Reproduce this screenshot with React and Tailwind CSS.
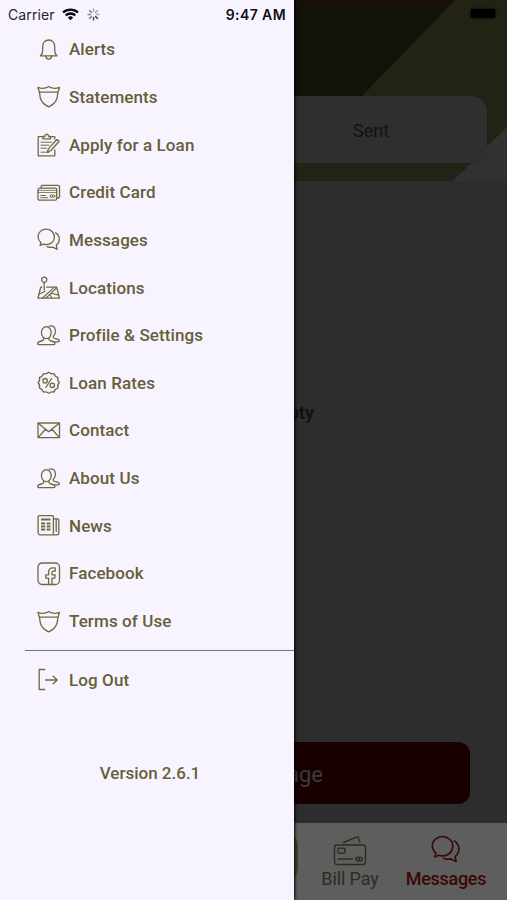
import React from "react";

function Icon({ size = 24, className = "", children }) {
  return (
    <svg width={size} height={size} viewBox="0 0 24 24" fill="none" stroke="currentColor" strokeWidth="1.3" strokeLinecap="round" strokeLinejoin="round" className={`shrink-0 ${className}`}>
      {children}
    </svg>
  );
}

const BellIcon = () => (
  <Icon>
    <path d="M3.500 17.800c1.800-1.400 2.200-2.700 2.200-5.200V8.800C5.700 4.800 8 2 11.700 2s6 2.800 6 6.800v3.800c0 2.500.4 3.800 2.200 5.200z" />
    <path d="M8.800 18c0 2 1.200 3.100 2.900 3.100s2.900-1.100 2.900-3.100" />
  </Icon>
);

const ShieldIcon = () => (
  <Icon>
    <path d="M1 2.400c2.600 1.100 6 1.300 8.200.3.900-.4 1.600-.7 2.500-1.200.9.500 1.600.8 2.500 1.200 2.200 1 5.600.8 8.200-.3-.2 1.900-.8 2.700-1.300 4.100-.6 1.900-.3 4.200-1.200 7-1.200 3.900-4.300 6.500-8.200 8.400-3.900-1.900-7-4.500-8.200-8.400-.9-2.800-.6-5.100-1.200-7C1.800 5.100 1.200 4.300 1 2.400z" />
    <path d="M2.300 7.200h18.800" />
  </Icon>
);

const LoanIcon = () => (
  <Icon>
    <path d="M6 3.700H1.200v19.100h16.600v-6M17.800 6.200V3.700H13" />
    <path d="M5.800 5.800V3.500h2.100c.1-1.500.7-2.300 1.800-2.300s1.700.8 1.800 2.300h2.100v2.300z" />
    <path d="M4 9.200h10.500M4 12.200h8M4 15.200h5.500M4 19.200h8" strokeWidth="1" />
    <path d="M20 6.500l2.200 1.800-8.300 9.200-3.600 1.600 1.200-3.500z" />
  </Icon>
);

const CardsIcon = () => (
  <Icon>
    <path d="M4.200 7V5.600c0-.8.500-1.300 1.300-1.300h15.700c.8 0 1.300.5 1.300 1.300v10.100c0 .8-.5 1.300-1.300 1.300H20" />
    <rect x="1" y="7.200" width="18.700" height="12" rx="1.500" />
    <path d="M1 9.400h18.700M1 11.500h18.700" strokeWidth=".8" />
    <path d="M3.700 14.500h5M3.700 16.700h7" strokeWidth="1" />
    <circle cx="14.300" cy="15.200" r="1.300" strokeWidth="1" />
    <circle cx="16.600" cy="15.200" r="1.300" strokeWidth="1" />
  </Icon>
);

const ChatPaths = () => (
  <>
    <path d="M3.100 17.500l.8-3A8.500 8.500 0 0 1 1 8.800C1 4.500 4.600 1.200 9.200 1.200s8.200 3.300 8.200 7.700-3.600 7.800-8.200 7.800c-1.100 0-2-.2-2.900-.5z" />
    <path d="M18.600 4.700a7.700 7.700 0 0 1 3.700 6.500c0 2.600-1.200 4.500-3 6l.8 4.100-4.200-2.200c-2.100.5-4 .3-5.700-.5" />
  </>
);

const ChatIcon = () => (
  <Icon>
    <ChatPaths />
  </Icon>
);

const MapIcon = () => (
  <Icon>
    <circle cx="7.200" cy="3.800" r="2.600" />
    <path d="M7.200 6.400v7.500" />
    <path d="M4.800 11.200H3.700L1 22.200h21.400l-2.700-11H9.500" />
    <path d="M1.900 18.200l6.300-3M5.500 22l11.700-10.600M9 22l10.500-10M14.200 17.300l7.500 1.800M13 18.500l1.600 3.500" strokeWidth="1.100" />
  </Icon>
);

const PeopleIcon = () => (
  <Icon>
    <path d="M12.400 2.200c3.400-1.300 6.100 1.200 6.100 5 0 2.200-.8 4-2.200 5.100v.9c0 .8.800 1.200 2.300 1.500 2.400.5 3.700 1 3.700 2.100 0 .8-.4 1-1.300 1h-3.300" />
    <path d="M6.700 13.800v1.500c0 1-.8 1.400-2.300 1.700-2.400.5-3.700 1.100-3.700 2.500 0 .9.500 1.200 1.400 1.200h14.400c.9 0 1.400-.3 1.400-1.200 0-1.400-1.300-2-3.700-2.500-1.500-.3-2.300-.7-2.300-1.700v-1.500" />
    <ellipse cx="9.300" cy="8.600" rx="4.900" ry="6" fill="#f8f4ff" />
  </Icon>
);

const PercentIcon = () => (
  <Icon>
    <path d="M11.700 1.200Q13.600 3.400 17 2.600Q17.600 5.700 20.900 6.500Q20.100 9.600 22.300 11.800Q20.100 14 20.900 17.100Q17.600 18 17 21Q13.800 20.200 11.700 22.400Q9.600 20.200 6.400 21Q5.600 18 2.500 17.100Q3.300 14 1.100 11.800Q3.300 9.600 2.500 6.500Q5.600 5.700 6.400 2.600Q9.600 3.400 11.700 1.200z" />
    <circle cx="8.100" cy="9.700" r="2.200" />
    <circle cx="15.300" cy="14.300" r="2.200" />
    <path d="M14.600 7.500l-5.800 9" />
  </Icon>
);

const MailIcon = () => (
  <Icon>
    <rect x="1" y="4" width="21.500" height="14.700" rx=".5" />
    <path d="M1.300 4.300l10.400 8.400 10.500-8.400M1.300 18.400l7.200-8.200M22.200 18.400L15 10.200" />
  </Icon>
);

const NewsIcon = () => (
  <Icon>
    <path d="M16.400 20.800V2.900c0-.9-.4-1.300-1.300-1.300H2.400c-.9 0-1.300.4-1.300 1.300v16.200c0 1.200.6 1.700 1.700 1.700h17c1.400 0 2-.7 2-2V6.300c0-1-.4-1.500-1.300-1.500h-4.100" />
    <path d="M19.200 5v12.500" />
    <path d="M4 5.500h9.500M4 9.500h4.200M4 12.500h4.200M4 15.500h4.200M9.700 9.500h3.800M9.700 12.500h3.800M9.700 15.500h3.800" strokeWidth="1.800" strokeLinecap="butt" />
  </Icon>
);

const FacebookIcon = () => (
  <Icon>
    <rect x="1" y="1" width="21.500" height="21.500" rx="4" />
    <path d="M11.600 22.300v-6.100H8.800v-3.400h2.800v-2.600c0-3 1.700-4.400 4.300-4.400h2.300v3.300h-1.700c-1.100 0-1.500.5-1.500 1.500v2.200h3.200l-.5 3.400H15v6.100" />
  </Icon>
);

const LogOutIcon = () => (
  <Icon>
    <path d="M8.200 1.500H2.200v20h6M8 12h12.200M15.700 7.700L20.200 12l-4.500 4.300" strokeLinecap="butt" />
  </Icon>
);

const menuItems = [
  { label: "Alerts", icon: BellIcon },
  { label: "Statements", icon: ShieldIcon },
  { label: "Apply for a Loan", icon: LoanIcon },
  { label: "Credit Card", icon: CardsIcon },
  { label: "Messages", icon: ChatIcon },
  { label: "Locations", icon: MapIcon },
  { label: "Profile & Settings", icon: PeopleIcon },
  { label: "Loan Rates", icon: PercentIcon },
  { label: "Contact", icon: MailIcon },
  { label: "About Us", icon: PeopleIcon },
  { label: "News", icon: NewsIcon },
  { label: "Facebook", icon: FacebookIcon },
  { label: "Terms of Use", icon: ShieldIcon },
];

function MenuItem({ label, icon: ItemIcon }) {
  return (
    <button className="flex h-[47.65px] w-full items-center gap-2 pl-[37px] text-left text-[#71683f]">
      <ItemIcon />
      <span className="whitespace-nowrap pt-[0.5px] tracking-[0.1px] text-[#675e3a]">{label}</span>
    </button>
  );
}

function StatusBar() {
  return (
    <div className="flex h-[26px] items-center pt-0.5 pl-2 pr-2 font-['Inter',sans-serif] text-[14px] font-normal text-[#25222b]">
      <span className="w-[48px] tracking-[0.1px]">Carrier</span>
      <svg width="17" height="13" viewBox="0 0 17 13" fill="none" stroke="#08070a" strokeWidth="2.300" className="ml-1.5">
        <path d="M1 4.500a11 11 0 0 1 15 0M3.700 7.400a7 7 0 0 1 9.600 0" />
        <path d="M8.500 12.300L5.800 9.600a4 4 0 0 1 5.400 0z" fill="#08070a" stroke="none" />
      </svg>
      <svg width="13" height="13" viewBox="0 0 13 13" strokeWidth="1.500" strokeLinecap="round" className="ml-2">
        <path d="M6.500 1v2.500M10.400 2.600L8.600 4.400M12 6.500H9.500" stroke="#aaa6b0" />
        <path d="M10.400 10.400L8.600 8.600M6.500 12V9.500" stroke="#4b4850" />
        <path d="M2.600 10.400l1.800-1.800M1 6.500h2.500M2.600 2.600l1.800 1.800" stroke="#89858f" />
      </svg>
      <span className="ml-auto font-semibold tracking-[0.4px] text-[#100e14]">9:47 AM</span>
    </div>
  );
}

function Drawer() {
  return (
    <aside className="absolute inset-y-0 left-0 flex w-[294px] flex-col bg-[#f8f4ff] text-[17px] font-medium text-[#675e3a] shadow-[1px_0_3px_#000]">
      <StatusBar />
      <nav>
        {menuItems.map((item) => (
          <MenuItem key={item.label} {...item} />
        ))}
        <div className="mt-[4.5px] ml-[25px] h-px bg-[#77748a]" />
        <div className="pt-[5.500px]">
          <MenuItem label="Log Out" icon={LogOutIcon} />
        </div>
      </nav>
      <p className="mt-[57.500px] pl-1.5 text-center">Version 2.6.1</p>
    </aside>
  );
}

function MessagesPage() {
  return (
    <main className="flex h-full flex-col bg-[#2d2d2d]">
      <header className="relative h-[181px] bg-[#313131] pt-24">
        <svg width="507" height="181" viewBox="0 0 507 181" className="absolute inset-0">
          <path d="M0 0h507v127l-55 54H0z" fill="#232315" />
          <path d="M0 0h455l-93 96-80 80H0z" fill="#12110a" />
          <path d="M0 163h472l-20 18H0z" fill="#232315" />
          <path d="M0 0h455l-8 8H0z" fill="#170f0a" />
        </svg>
        <div className="absolute top-[9px] right-[12px] h-[9px] w-[24px] bg-black shadow-[0_0_3px_#000]" />
        <div className="relative mr-5 ml-5 flex h-[67px] items-center rounded-2xl rounded-br-none bg-[#2f2f2f] pt-px pl-[333px] text-[18px] text-[#111315]">
          Sent
        </div>
      </header>
      <section className="flex grow flex-col">
        <p className="mt-[218px] pr-[193px] text-right text-[18px] font-bold text-[#0c1316]">Empty</p>
        <button className="mt-auto mr-[37px] mb-[19px] ml-[37px] flex h-[62px] items-center justify-end rounded-xl bg-[#160000] pt-0.5 pr-[147px] text-[22px] text-[#403a3a]">
          Message
        </button>
      </section>
      <footer className="relative flex h-[77px] justify-end overflow-hidden bg-[#5e5e5e] pt-3 text-[18px]">
        <div className="absolute top-[8px] left-[212px] h-[52px] w-[86px] rounded-2xl border-2 border-[#3c4623] bg-[#454c2c]" />
        <div className="flex w-[96px] flex-col items-center text-[#2e2c1e]">
          <svg width="34" height="32" viewBox="0 0 34 32" fill="none" stroke="currentColor" strokeWidth="1.400" strokeLinejoin="round">
            <rect x="1.500" y="10" width="31" height="19.500" rx="2.500" />
            <rect x="5" y="13.300" width="7" height="5" rx="1.200" />
            <path d="M5 24h14.500M10.500 7.500L23 2.300c1.300-.5 2-.3 2.500.8l1.200 3.800" strokeLinecap="round" />
            <circle cx="24.700" cy="24" r="1.900" />
            <circle cx="27.500" cy="24" r="1.900" />
          </svg>
          <span className="mt-[-2px] tracking-[-0.1px]">Bill Pay</span>
        </div>
        <div className="mr-[13px] flex w-[96px] flex-col items-center font-medium text-[#3a0808]">
          <Icon size={30} className="mb-0.5">
            <ChatPaths />
          </Icon>
          <span className="mt-[-2px] tracking-[-0.3px]">Messages</span>
        </div>
      </footer>
    </main>
  );
}

export default function App() {
  return (
    <div className="relative h-[900px] w-[507px] overflow-hidden font-['Roboto',sans-serif]">
      <MessagesPage />
      <Drawer />
    </div>
  );
}
